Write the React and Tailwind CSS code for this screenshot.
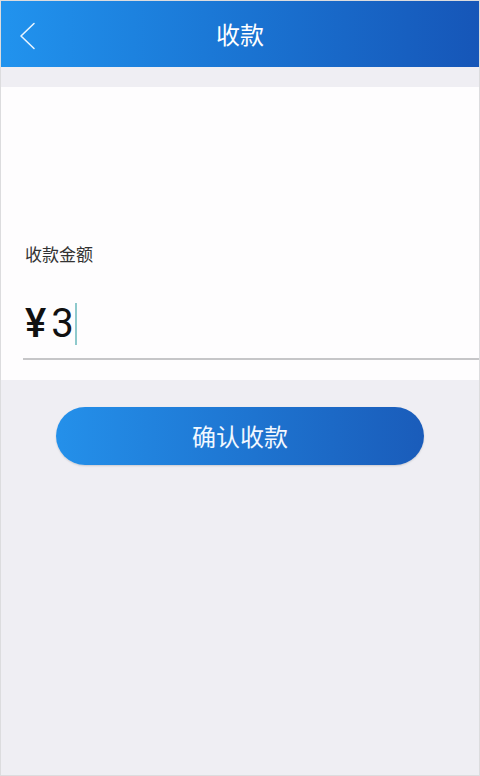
const App = () => {
  return (
    <div
      className="flex h-[776px] w-[480px] flex-col overflow-hidden border border-[#dcdcde] bg-[#efeef3]"
      style={{ fontFamily: '"Noto Sans CJK SC", "Noto Sans", sans-serif' }}
    >
      <header className="relative flex h-[66px] shrink-0 items-center justify-center bg-gradient-to-r from-[#2193ee] to-[#1656b8]">
        <svg className="absolute left-[17px] top-[21px] h-[28px] w-[18px]" viewBox="0 0 18 28" fill="none">
          <path d="M16 1.5 3 14l13 12.5" stroke="#e8f4ff" strokeWidth="1.6" strokeLinecap="round" strokeLinejoin="round" />
        </svg>
        <h1 className="text-[24px] font-normal text-white">收款</h1>
      </header>

      <div className="h-[20px] shrink-0" />

      <section className="flex h-[293px] shrink-0 flex-col bg-[#fefdfe]">
        <div className="h-[156px] shrink-0" />
        <p className="pl-[24px] text-[17px] leading-[22px] text-[#333]">收款金额</p>
        <div
          className="ml-[22px] mt-[25px] flex h-[70px] items-center border-b-2 border-[#c6c6c8] pl-[2px]"
          style={{ fontFamily: 'Roboto, sans-serif' }}
        >
          <span className="text-[40px] font-medium leading-none text-[#111]">¥</span>
          <span className="ml-[5px] text-[40px] leading-none text-[#111]">3</span>
          <span className="ml-[1px] h-[42px] w-[2px] bg-[#8ec9cc]" />
        </div>
      </section>

      <div className="flex justify-center pt-[27px]">
        <button className="h-[58px] w-[368px] rounded-full bg-gradient-to-r from-[#2490ea] to-[#1a5cba] text-[24px] text-[#f2f8ff] shadow-[0_1px_2px_rgba(0,0,0,0.15)]">
          确认收款
        </button>
      </div>
    </div>
  );
};

export default App;
